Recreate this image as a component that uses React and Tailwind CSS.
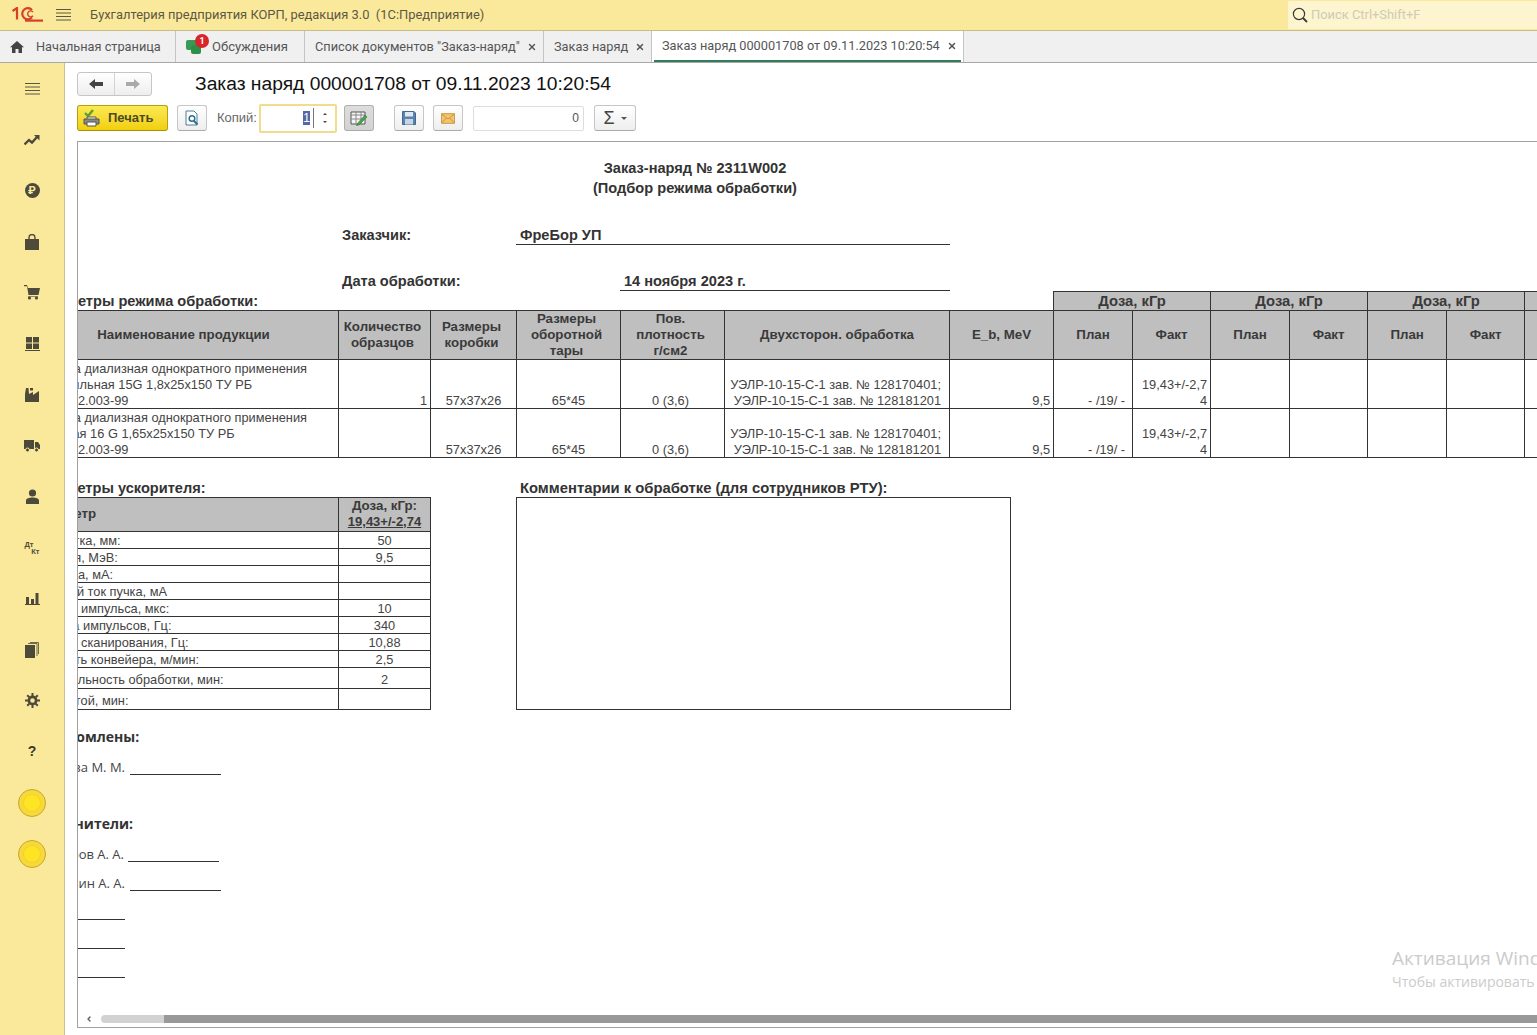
import React from 'react';
import { X, ChevronLeft } from 'lucide-react';

const sans = 'font-[Liberation_Sans,Arial,sans-serif]';

// 1C logo
const Logo = () => (
    <svg width="31" height="16" viewBox="0 0 31 16" fill="none" stroke="#d6402b" strokeWidth="2.2">
        <path d="M0.5 4 L5 1 V12.5" />
        <path d="M20 3 A5.6 5.6 0 1 0 20 10.5" />
        <path d="M21 5 A3 3 0 1 0 21 8.8" strokeWidth="1.4" />
        <path d="M13 13.6 H31" />
    </svg>
);

const Burger = ({ color = '#5a5640' }) => (
    <svg width="15" height="14" viewBox="0 0 15 14" stroke={color} strokeWidth="1">
        <path d="M0 1.5H15M0 5H15M0 8.5H15M0 12H15" />
    </svg>
);

const fillIcon = '#4d4a3c';

const sideIcons = [
    <Burger key="menu" />,
    <svg key="trend" width="16" height="12" viewBox="0 0 16 12" fill="none" stroke={fillIcon} strokeWidth="2.4"><path d="M0.5 10.5 L5 6 L8 8.5 L13 3" /><path d="M10 1 H15.5 V6.5 Z" fill={fillIcon} stroke="none" /></svg>,
    <div key="rub" className="w-[15px] h-[15px] rounded-full bg-[#4d4a3c] text-[#fbe99b] text-[11px] font-bold leading-[15px] text-center">₽</div>,
    <svg key="bag" width="14" height="16" viewBox="0 0 14 16" fill={fillIcon}><path d="M0 5H14V16H0Z" /><path d="M4 7V3.5A3 3 0 0 1 10 3.5V7" fill="none" stroke={fillIcon} strokeWidth="1.4" /></svg>,
    <svg key="cart" width="16" height="15" viewBox="0 0 16 15" fill={fillIcon}><path d="M0 0H3L4 3H16L14.5 10H4.5L3 1.2H0Z" /><circle cx="5.5" cy="13" r="1.6" /><circle cx="12.5" cy="13" r="1.6" /><path d="M4 11H14V11.6H4Z" /></svg>,
    <svg key="grid" width="15" height="14" viewBox="0 0 15 14" fill={fillIcon}><path d="M1 0H7V5.5H1ZM8 0H14V5.5H8ZM1 6.5H7V12H1ZM8 6.5H14V12H8ZM0 13H15V14H0Z" /></svg>,
    <svg key="factory" width="14" height="15" viewBox="0 0 14 15" fill={fillIcon}><path d="M0 15V7L1 1H3.5L4 7L8 5V8L14 4V15Z" /><path d="M5 1H8V3.5H5Z" /></svg>,
    <svg key="truck" width="16" height="12" viewBox="0 0 16 12" fill={fillIcon}><path d="M0 0H10V9H0Z" /><path d="M11 2H14L16 5V9H11Z" /><circle cx="3.5" cy="10" r="2" stroke="#fbe99b" /><circle cx="12.5" cy="10" r="2" stroke="#fbe99b" /></svg>,
    <svg key="user" width="13" height="15" viewBox="0 0 13 15" fill={fillIcon}><circle cx="6.5" cy="4" r="3.6" /><path d="M0 15V11.5C0 9.5 3 8.5 6.5 8.5S13 9.5 13 11.5V15Z" /></svg>,
    <div key="dtkt" className={`w-[15px] text-[7.5px] font-bold leading-[7px] text-[#4d4a3c] ${sans}`}>
        <div>Дт</div>
        <div className="text-right">Кт</div>
    </div>,
    <svg key="bars" width="15" height="13" viewBox="0 0 15 13" fill={fillIcon}><path d="M1 5H4V12H1ZM6 7H9V12H6ZM10.5 1H13.5V12H10.5ZM0 12H15V13H0Z" /></svg>,
    <svg key="pages" width="14" height="16" viewBox="0 0 14 16" fill={fillIcon}><path d="M0 3H10V16H0Z" /><path d="M3 1.5H12V14M5 0.5H13.5V12" fill="none" stroke={fillIcon} strokeWidth="0.8" /></svg>,
    <svg key="gear" width="15" height="15" viewBox="0 0 15 15" fill="none" stroke={fillIcon}><circle cx="7.5" cy="7.5" r="3.6" strokeWidth="2.6" /><path d="M7.5 0V3M7.5 12V15M0 7.5H3M12 7.5H15M2.2 2.2L4.3 4.3M10.7 10.7L12.8 12.8M2.2 12.8L4.3 10.7M10.7 4.3L12.8 2.2" strokeWidth="2" /></svg>,
    <div key="help" className={`text-[14px] font-bold text-[#3c3a30] ${sans}`}>?</div>,
    <Coin key="c1" />,
    <Coin key="c2" />,
];

function Coin() {
    return (
        <div className="w-[28px] h-[28px] rounded-full bg-[#f9d93a] border border-[#c4a82c] flex items-center justify-center">
            <div className="w-[18px] h-[18px] rounded-full bg-[#fde524] border border-[#f0d030]"></div>
        </div>
    );
}

const Tab = ({ className, children, close }) => (
    <div className={`h-full flex items-center border-r border-[#c4c4c4] whitespace-nowrap ${className}`}>
        {children}
        {close && <X size={10} strokeWidth={3.5} className="text-[#555] ml-[7px]" />}
    </div>
);

const ToolButton = ({ className = '', tone = 'from-white to-[#eeeeee] border-[#c6c6c6]', children }) => (
    <div className={`h-[26px] flex items-center justify-center rounded-[3px] border border-b-[#aaa] bg-linear-to-b ${tone} ${className}`}>
        {children}
    </div>
);

const HeadCell = ({ className = '', size = 'text-[13.3px]', children, ...rest }) => (
    <th {...rest} className={`border border-[#333] bg-[#bfbfbf] text-[#3a3a3a] ${size} leading-[16px] font-bold text-center align-middle p-0 ${className}`}>
        {children}
    </th>
);

const Cell = ({ className = '', children }) => (
    <td className={`border border-[#333] text-[#444] text-[12.8px] leading-[16px] align-bottom p-0 overflow-hidden whitespace-nowrap ${className}`}>
        <div className="translate-y-px">{children}</div>
    </td>
);

const products = [
    {
        lines: [
            { text: 'Фистула диализная однократного применения', pad: 'pl-[2px]' },
            { text: 'стерильная 15G 1,8x25x150 ТУ РБ', pad: 'pl-[17px]' },
            { text: '14401112.003-99', pad: 'pl-[1px]' },
        ],
        qty: '1',
    },
    {
        lines: [
            { text: 'Фистула диализная однократного применения', pad: 'pl-[2px]' },
            { text: 'острая 16 G 1,65x25x150 ТУ РБ', pad: 'pl-[17px]' },
            { text: '14401112.003-99', pad: 'pl-[1px]' },
        ],
        qty: '',
    },
];

const params = [
    { label: 'Развертка, мм:', value: '50', h: 'h-[17px]', pad: 'pl-[3px]' },
    { label: 'Энергия, МэВ:', value: '9,5', h: 'h-[17px]', pad: 'pl-[3px]' },
    { label: 'Ток пучка, мА:', value: '', h: 'h-[17px]', pad: 'pl-0' },
    { label: 'Средний ток пучка, мА', value: '', h: 'h-[17px]', pad: 'pl-[3px]' },
    { label: 'Длина импульса, мкс:', value: '10', h: 'h-[17px]', pad: 'pl-[11px]' },
    { label: 'Частота импульсов, Гц:', value: '340', h: 'h-[17px]', pad: 'pl-[3px]' },
    { label: 'Частота сканирования, Гц:', value: '10,88', h: 'h-[17px]', pad: 'pl-px' },
    { label: 'Скорость конвейера, м/мин:', value: '2,5', h: 'h-[17px]', pad: 'pl-[3px]' },
    { label: 'Длительность обработки, мин:', value: '2', h: 'h-[21px]', pad: 'pl-[13px]', extra: 'pt-[2px]' },
    { label: 'Простой, мин:', value: '', h: 'h-[21px]', pad: 'pl-[16px]', extra: 'pt-[2px]' },
];

const doseGroups = [0, 1, 2, 3];

const OrderTable = () => (
    <table className="table-fixed border-collapse w-[1610px]">
        <colgroup>
            <col className="w-[310px]" />
            <col className="w-[92px]" />
            <col className="w-[86px]" />
            <col className="w-[104px]" />
            <col className="w-[104px]" />
            <col className="w-[225px]" />
            <col className="w-[104px]" />
            {doseGroups.map((g) => (
                <React.Fragment key={g}>
                    <col className="w-[79px]" />
                    <col className="w-[78px]" />
                </React.Fragment>
            ))}
        </colgroup>
        <thead>
            <tr className="h-[18px]">
                <th colSpan={7} className="p-0 pl-[3px] text-left text-[14.6px] leading-[18px] font-bold text-[#333] align-bottom">
                    Параметры режима обработки:
                </th>
                {doseGroups.map((g) => (
                    <HeadCell key={g} colSpan={2} size="text-[14.8px]">Доза, кГр</HeadCell>
                ))}
            </tr>
            <tr className="h-[49px]">
                <HeadCell>Наименование продукции</HeadCell>
                <HeadCell className="pr-[4px]">Количество<br />образцов</HeadCell>
                <HeadCell className="pr-[4px]">Размеры<br />коробки</HeadCell>
                <HeadCell className="pr-[4px]">Размеры<br />оборотной<br />тары</HeadCell>
                <HeadCell className="pr-[4px]">Пов.<br />плотность<br />г/см2</HeadCell>
                <HeadCell>Двухсторон. обработка</HeadCell>
                <HeadCell>E_b, MeV</HeadCell>
                {doseGroups.map((g) => (
                    <React.Fragment key={g}>
                        <HeadCell>План</HeadCell>
                        <HeadCell>Факт</HeadCell>
                    </React.Fragment>
                ))}
            </tr>
        </thead>
        <tbody>
            {products.map((p, i) => (
                <tr key={i} className="h-[49px]">
                    <Cell>
                        {p.lines.map((l) => <div key={l.text} className={l.pad}>{l.text}</div>)}
                    </Cell>
                    <Cell className="text-right pr-[3px]">{p.qty}</Cell>
                    <Cell className="text-center">57x37x26</Cell>
                    <Cell className="text-center">65*45</Cell>
                    <Cell className="text-center pr-[4px]">0 (3,6)</Cell>
                    <Cell className="text-right pr-[8px]">
                        <div>УЭЛР-10-15-С-1 зав. № 128170401;</div>
                        <div>УЭЛР-10-15-С-1 зав. № 128181201</div>
                    </Cell>
                    <Cell className="text-right pr-[3px]">9,5</Cell>
                    <Cell className="text-right pr-[7px]">- /19/ -</Cell>
                    <Cell className="text-right pr-[3px]">
                        <div>19,43+/-2,7</div>
                        <div>4</div>
                    </Cell>
                    {[0, 1, 2, 3, 4, 5].map((c) => <Cell key={c}></Cell>)}
                </tr>
            ))}
        </tbody>
    </table>
);

const ParamsTable = () => (
    <table className="table-fixed border-collapse w-[402px]">
        <colgroup>
            <col className="w-[310px]" />
            <col className="w-[92px]" />
        </colgroup>
        <thead>
            <tr className="h-[34px]">
                <HeadCell className="text-left pl-[3px]">Параметр</HeadCell>
                <HeadCell size="text-[13.3px]">
                    <div>Доза, кГр:</div>
                    <div className="underline text-[13px]">19,43+/-2,74</div>
                </HeadCell>
            </tr>
        </thead>
        <tbody>
            {params.map((p) => (
                <tr key={p.label} className={p.h}>
                    <Cell className={`align-middle ${p.pad} ${p.extra || ''}`}>{p.label}</Cell>
                    <Cell className={`text-center align-middle ${p.extra || ''}`}>{p.value}</Cell>
                </tr>
            ))}
        </tbody>
    </table>
);

const Signature = ({ name, className = '', nameW = 'w-[97px]', lineW = 'w-[91px]', gap = 'ml-[5px]' }) => (
    <div className={`h-[18px] flex items-end font-[Open_Sans,sans-serif] text-[13px] text-[#444] ${className}`}>
        <div className={`${nameW} -mb-[2px] text-right whitespace-nowrap leading-[20px]`}>{name}</div>
        <div className={`${lineW} ${gap} border-b border-[#333]`}></div>
    </div>
);

const BlankLine = ({ className = '' }) => (
    <div className={`h-[18px] w-[97px] border-b border-[#333] ${className}`}></div>
);

const Document = () => (
    <div className={`w-[1610px] -ml-[50px] pt-[16px] text-[#333] ${sans}`}>
        <div className="w-[1334px] text-center text-[14.6px] leading-[20px] font-bold">
            <div>Заказ-наряд № 2311W002</div>
            <div>(Подбор режима обработки)</div>
        </div>

        <div className="mt-[27px] pl-[314px] flex text-[14.6px] leading-[20px] font-bold">
            <div className="w-[174px]">Заказчик:</div>
            <div className="w-[434px] h-[20px] pl-[4px] border-b border-[#333]">ФреБор УП</div>
        </div>
        <div className="mt-[26px] pl-[314px] flex text-[14.6px] leading-[20px] font-bold">
            <div className="w-[278px]">Дата обработки:</div>
            <div className="w-[330px] h-[20px] pl-[4px] border-b border-[#333]">14 ноября 2023 г.</div>
        </div>

        <OrderTable />

        <div className="mt-[20px] flex">
            <div className="w-[402px]">
                <div className="h-[19px] pl-[3px] text-[14.6px] leading-[21px] font-bold">Параметры ускорителя:</div>
                <ParamsTable />
            </div>
            <div className="ml-[86px] w-[495px] flex flex-col">
                <div className="h-[19px] pl-[4px] text-[14.8px] leading-[21px] font-bold whitespace-nowrap">Комментарии к обработке (для сотрудников РТУ):</div>
                <div className="flex-1 border border-[#333]"></div>
            </div>
        </div>

        <div className="mt-[17px] font-[Open_Sans,sans-serif]">
            <div className="pl-[3px] h-[20px] text-[14px] leading-[20px] font-bold text-[#333]">Ознакомлены:</div>
            <Signature name="Иванова М. М." className="mt-[10px]" />
            <div className="mt-[39px] pl-px h-[20px] text-[14px] leading-[20px] font-bold text-[#333]">Исполнители:</div>
            <Signature name="Петров А. А." className="mt-[10px]" nameW="w-[96px]" gap="ml-[4px]" />
            <Signature name="Ильин А. А." className="mt-[11px]" />
            <BlankLine className="mt-[11px]" />
            <BlankLine className="mt-[11px]" />
            <BlankLine className="mt-[11px]" />
        </div>
    </div>
);

const Toolbar = () => (
    <div className={`mt-[9px] h-[26px] flex items-center text-[#444] ${sans}`}>
        <div className="w-[91px] h-[26px] flex items-center rounded-[3px] border border-[#b89f10] border-b-[#a89008] bg-linear-to-b from-[#fbea50] to-[#f1cf00]">
            <svg width="18" height="18" viewBox="0 0 18 18" className="ml-[5px]">
                <path d="M2 4L5 7L10 1" fill="none" stroke="#58a03a" strokeWidth="2.4" />
                <path d="M4 8H13V11H4Z" fill="#fff" stroke="#555" />
                <path d="M1 10H16V15H1Z" fill="#8a8a7a" stroke="#555" />
                <path d="M4 13H13V17H4Z" fill="#fff" stroke="#555" />
            </svg>
            <span className="ml-[7px] text-[13px] font-bold text-[#4d4a22]">Печать</span>
        </div>
        <ToolButton className="ml-[9px] w-[30px]">
            <svg width="14" height="16" viewBox="0 0 14 16" fill="none">
                <path d="M1 1H9L12 4V15H1Z" fill="#fff" stroke="#4d7f98" />
                <circle cx="7" cy="8.5" r="2.8" stroke="#2a6f8f" strokeWidth="1.5" />
                <path d="M9 11L12.5 14.5" stroke="#2a6f8f" strokeWidth="2" />
            </svg>
        </ToolButton>
        <div className="ml-[10px] w-[42px] text-[13px] text-[#666] whitespace-nowrap">Копий:</div>
        <div className="w-[78px] h-[29px] flex items-center justify-end border-2 border-[#f0dc8a] bg-white rounded-[2px]">
            <div className="w-[7px] h-[14px] bg-[#5468a8] text-white text-[12px] leading-[14px] text-center">1</div>
            <div className="ml-[3px] h-[20px] w-[22px] border-l border-[#777] flex flex-col items-center justify-center gap-[6px]">
                <div className="w-0 h-0 border-x-[2px] border-x-transparent border-b-[2px] border-b-[#444]"></div>
                <div className="w-0 h-0 border-x-[2px] border-x-transparent border-t-[2px] border-t-[#444]"></div>
            </div>
        </div>
        <ToolButton className="ml-[7px] w-[30px]" tone="from-[#dddddd] to-[#d2d2d2] border-[#b0b0b0]">
            <svg width="18" height="15" viewBox="0 0 18 15" fill="none">
                <path d="M1 1H15V13H1Z" fill="#f4f4f4" stroke="#555" />
                <path d="M1 4H15M1 8H15M6 1V13M11 1V13" stroke="#888" />
                <path d="M7 13L15 4L17 6L9 14L6.5 14.5Z" fill="#4fa04a" stroke="#2f7c36" strokeWidth="0.6" />
            </svg>
        </ToolButton>
        <ToolButton className="ml-[20px] w-[30px]">
            <svg width="14" height="14" viewBox="0 0 14 14">
                <path d="M0.5 0.5H12L13.5 2V13.5H0.5Z" fill="#5a83b0" stroke="#46688c" />
                <path d="M3 1H11V5.5H3Z" fill="#dfe7ef" />
                <path d="M3 8H11V13.5H3Z" fill="#c8d6e4" />
            </svg>
        </ToolButton>
        <ToolButton className="ml-[9px] w-[30px]">
            <svg width="14" height="11" viewBox="0 0 16 12" fill="none">
                <path d="M0.5 0.5H15.5V11.5H0.5Z" fill="#f2c56c" stroke="#c0903a" />
                <path d="M1 1L8 6.5L15 1M1 11L6 5.5M15 11L10 5.5" stroke="#c0903a" />
            </svg>
        </ToolButton>
        <div className="ml-[10px] w-[111px] h-[25px] border border-[#dddddd] rounded-[2px] bg-white text-right pr-[4px] text-[12px] leading-[23px] text-[#555]">0</div>
        <ToolButton className="ml-[10px] w-[42px] gap-[6px]">
            <span className="text-[18px] leading-[18px] text-[#444]">Σ</span>
            <div className="w-0 h-0 border-x-[3px] border-x-transparent border-t-[3px] border-t-[#555]"></div>
        </ToolButton>
    </div>
);

export default function App() {
    return (
        <div className="relative w-screen h-screen overflow-hidden flex flex-col bg-white font-[Roboto,sans-serif]">
            {/* header */}
            <div className="h-[31px] shrink-0 flex items-center bg-[#fbe99b] border-b border-[#c9bd86]">
                <div className="ml-[12px] w-[32px] flex"><Logo /></div>
                <div className="ml-[12px] flex"><Burger /></div>
                <div className="ml-[19px] text-[12.9px] text-[#5c5844] whitespace-pre">Бухгалтерия предприятия КОРП, редакция 3.0  (1С:Предприятие)</div>
                <div className="ml-auto w-[249px] h-[28px] flex items-center bg-[#fdf4d0]">
                    <svg width="16" height="16" viewBox="0 0 16 16" fill="none" stroke="#3c3a30" className="ml-[4px]">
                        <circle cx="7" cy="7" r="5.6" strokeWidth="1.2" />
                        <path d="M11 11L15 15" strokeWidth="1.8" />
                    </svg>
                    <span className="ml-[3px] text-[12.9px] text-[#cfcbb4]">Поиск Ctrl+Shift+F</span>
                </div>
            </div>

            {/* tabs */}
            <div className="h-[32px] shrink-0 flex bg-[#f0f0f0] border-b border-[#a8a8a8] text-[12.75px] text-[#555]">
                <Tab className="w-[176px] pl-[10px]">
                    <svg width="14" height="12" viewBox="0 0 14 12" fill="#444"><path d="M7 0L14 6.2H12V12H8.5V8H5.5V12H2V6.2H0Z" /></svg>
                    <span className="ml-[12px]">Начальная страница</span>
                </Tab>
                <Tab className="w-[129px] pl-[10px]">
                    <div className="relative w-[16px] h-[16px] mt-[2px]">
                        <div className="w-[13px] h-[10px] bg-[#3a9a55] rounded-[2px]"></div>
                        <div className="absolute left-[5px] top-[5px] w-[10px] h-[9px] bg-[#2f8f4a] rounded-[2px]"></div>
                        <div className="absolute -top-[6px] left-[9px] w-[14px] h-[14px] rounded-full bg-[#d9252a] text-white text-[9px] font-bold leading-[14px] text-center">1</div>
                    </div>
                    <span className="ml-[10px] text-[13px]">Обсуждения</span>
                </Tab>
                <Tab className="w-[239px] pl-[10px]" close>Список документов "Заказ-наряд"</Tab>
                <Tab className="w-[108px] pl-[10px]" close>Заказ наряд</Tab>
                <div className="w-[312px] h-full bg-white border-r border-[#c4c4c4] px-[2px]">
                    <div className="h-full flex items-center pl-[8px] border-b-2 border-[#2e7d5b] whitespace-nowrap">
                        Заказ наряд 000001708 от 09.11.2023 10:20:54
                        <X size={10} strokeWidth={3.5} className="text-[#555] ml-[7px]" />
                    </div>
                </div>
            </div>

            <div className="flex-1 min-h-0 flex">
                {/* sidebar */}
                <div className="w-[65px] shrink-0 bg-[#fbe99b] border-r border-[#c9c09a]">
                    {sideIcons.map((icon) => (
                        <div key={icon.key} className="h-[51px] flex items-center justify-center">{icon}</div>
                    ))}
                </div>

                {/* main */}
                <div className="flex-1 min-w-0 pl-[12px] pt-[9px]">
                    <div className="h-[24px] flex items-center">
                        <div className="w-[75px] h-[24px] flex rounded-[3px] border border-[#c6c6c6] bg-linear-to-b from-white to-[#eeeeee]">
                            <div className="flex-1 flex items-center justify-center border-r border-[#d4d4d4]">
                                <svg width="14" height="10" viewBox="0 0 14 10" fill="#444"><path d="M0 5L6 0V3H14V7H6V10Z" /></svg>
                            </div>
                            <div className="flex-1 flex items-center justify-center">
                                <svg width="14" height="10" viewBox="0 0 14 10" fill="#aaa"><path d="M14 5L8 0V3H0V7H8V10Z" /></svg>
                            </div>
                        </div>
                        <h1 className={`ml-[43px] text-[19.25px] font-normal text-[#111] whitespace-nowrap ${sans}`}>Заказ наряд 000001708 от 09.11.2023 10:20:54</h1>
                    </div>

                    <Toolbar />

                    <div className="mt-[10px] h-[887px] flex flex-col border-t border-l border-b border-[#a0a0a0]">
                        <div className="flex-1 min-h-0 overflow-hidden">
                            <Document />
                        </div>
                        <div className="h-[12px] shrink-0 mb-[2px] flex items-center">
                            <ChevronLeft size={8} strokeWidth={4} className="ml-[7px] text-[#555]" />
                            <div className="ml-[8px] w-[63px] h-[8px] rounded-l-full bg-[#d2d2d2]"></div>
                            <div className="flex-1 h-[8px] bg-[#999]"></div>
                        </div>
                    </div>
                </div>
            </div>

            {/* windows activation watermark */}
            <div className="absolute left-[1392px] top-[945px] whitespace-nowrap pointer-events-none text-[#cbcbcb] font-[Open_Sans,sans-serif]">
                <div className="text-[19px] leading-[26px]">Активация Windows</div>
                <div className="text-[14px] leading-[20px] mt-[1px]">Чтобы активировать Windows, перейдите в раздел "Параметры".</div>
            </div>
        </div>
    );
}
